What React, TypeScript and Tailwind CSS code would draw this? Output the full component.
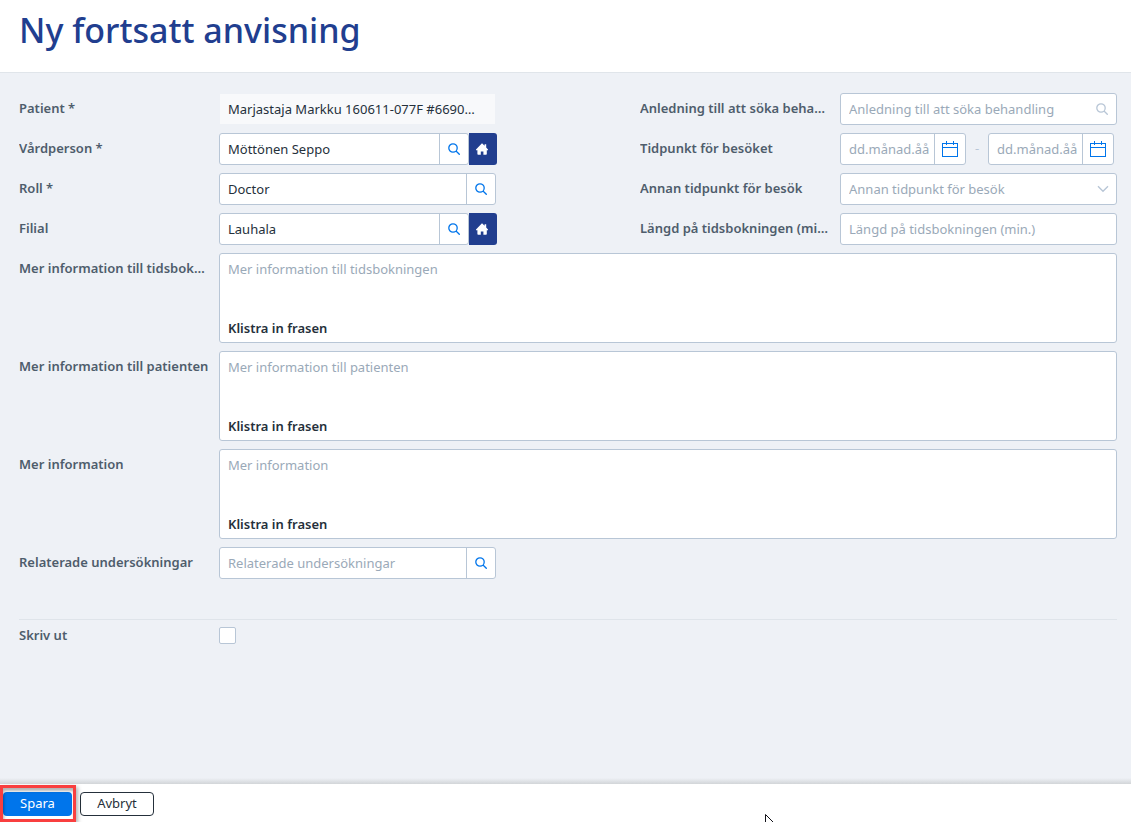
import type { ReactNode } from "react";

const inputClass =
  "h-full w-full min-w-0 truncate bg-transparent pl-2 text-[#25303b] outline-none placeholder:text-[#9aa9b8]";
const boxClass = "flex h-8 w-full rounded-[3px] border border-[#b8c6d6] bg-white";
const labelClass = "h-8 truncate pr-2 font-semibold leading-[30px] text-[#4e5d6c]";

function SearchIcon() {
  return (
    <svg width="12" height="12" viewBox="0 0 12 12" fill="none" stroke="currentColor" strokeWidth="1.3">
      <circle cx="5" cy="5" r="4.2" />
      <path d="M8 8l3.7 3.7" />
    </svg>
  );
}

function HomeIcon() {
  return (
    <svg width="12" height="12" viewBox="0 0 12 12" fill="currentColor">
      <path d="M6 0.3L8.6 2.8V1.2h1.6v3.2L12 6.4v0.8h-1.2V11a.8.8 0 0 1-.8.8H7.4V8.4H4.8v3.4H2.2a.8.8 0 0 1-.8-.8V7.2H0V6.4z" />
    </svg>
  );
}

function CalendarIcon() {
  return (
    <svg width="16" height="16" viewBox="0 0 16 16" fill="none" stroke="currentColor" shapeRendering="crispEdges">
      <path d="M.5 2.5h15v13H.5zM0 6.5h16M4.5 0v4M11.5 0v4" />
    </svg>
  );
}

function Label({ id, children }: { id: string; children: ReactNode }) {
  return (
    <label htmlFor={id} className={labelClass}>
      {children}
    </label>
  );
}

type LookupProps = { id: string; value?: string; placeholder?: string; home?: boolean };

function LookupField({ id, value, placeholder, home }: LookupProps) {
  return (
    <div className={home ? "-mr-px flex" : "flex"}>
      <div className={boxClass}>
        <input id={id} type="text" defaultValue={value} placeholder={placeholder} className={inputClass} />
        <button
          type="button"
          aria-label="Sök"
          className="flex w-[29px] shrink-0 items-center justify-center border-l border-[#b8c6d6] text-[#0075eb]"
        >
          <SearchIcon />
        </button>
      </div>
      {home && (
        <button
          type="button"
          aria-label="Hem"
          className="flex h-8 w-7 shrink-0 items-center justify-center rounded-r-[3px] bg-[#213e8f] pr-0.5 text-white"
        >
          <HomeIcon />
        </button>
      )}
    </div>
  );
}

function DateField({ id, label }: { id: string; label?: string }) {
  return (
    <div className="flex h-8 w-[126px] rounded-[3px] border border-[#b8c6d6] bg-white">
      <input id={id} aria-label={label} type="text" placeholder="dd.månad.åå" className={inputClass} />
      <button
        type="button"
        aria-label="Kalender"
        className="flex w-[31px] shrink-0 items-center justify-center border-l border-[#b8c6d6] text-[#0075eb]"
      >
        <CalendarIcon />
      </button>
    </div>
  );
}

function NoteField({ id, label }: { id: string; label: string }) {
  return (
    <>
      <Label id={id}>{label}</Label>
      <div className="col-span-4 flex h-[90px] flex-col items-start rounded-[3px] border border-[#b8c6d6] bg-white">
        <textarea
          id={id}
          placeholder={label}
          className="w-full flex-1 resize-none px-2 pt-[5px] leading-5 outline-none placeholder:text-[#9aa9b8]"
        />
        <button type="button" className="h-[26px] px-2 font-semibold text-[#25303b]">
          Klistra in frasen
        </button>
      </div>
    </>
  );
}

export default function App() {
  return (
    <div className="flex min-h-screen flex-col bg-[#eef1f6] font-['Noto_Sans','Open_Sans',sans-serif] text-[13px]">
      <header className="h-[73px] border-b border-[#e0e5ea] bg-white px-[19px] pt-1">
        <h1 className="text-[34px] font-medium leading-[52px] text-[#213e8f]">Ny fortsatt anvisning</h1>
      </header>

      <main className="flex-1 pt-5 pr-3.5 pl-[19px]">
        <form>
          <div className="grid grid-cols-[200px_minmax(0,1fr)_144px_200px_minmax(0,1fr)] gap-y-2">
            <Label id="patient">Patient *</Label>
            <div className="h-8 p-px">
              <input
                id="patient"
                type="text"
                readOnly
                defaultValue="Marjastaja Markku 160611-077F #6690…"
                className="h-full w-full truncate bg-[#f8f9fb] px-2 text-[#25303b] outline-none"
              />
            </div>
            <div />
            <Label id="reason">Anledning till att söka behandling</Label>
            <div className={boxClass}>
              <input id="reason" type="text" placeholder="Anledning till att söka behandling" className={inputClass} />
              <button
                type="button"
                aria-label="Sök"
                className="flex w-7 shrink-0 items-center justify-center text-[#b8c6d6]"
              >
                <SearchIcon />
              </button>
            </div>

            <Label id="provider">Vårdperson *</Label>
            <LookupField id="provider" value="Möttönen Seppo" home />
            <div />
            <Label id="visit-from">Tidpunkt för besöket</Label>
            <div className="flex items-center">
              <DateField id="visit-from" />
              <span className="w-[22px] text-center text-[#b8c6d6]">-</span>
              <DateField id="visit-to" label="Tidpunkt för besöket, till" />
            </div>

            <Label id="role">Roll *</Label>
            <LookupField id="role" value="Doctor" />
            <div />
            <Label id="other-time">Annan tidpunkt för besök</Label>
            <div className="relative">
              <select
                id="other-time"
                className="h-8 w-full appearance-none rounded-[3px] border border-[#b8c6d6] bg-white px-2 pt-px text-[#9aa9b8] outline-none"
              >
                <option>Annan tidpunkt för besök</option>
              </select>
              <svg
                className="pointer-events-none absolute top-3 right-2 text-[#b8c6d6]"
                width="12"
                height="8"
                viewBox="0 0 12 8"
                fill="none"
                stroke="currentColor"
                strokeWidth="1.4"
              >
                <path d="M1 1.2l5 5 5-5" />
              </svg>
            </div>

            <Label id="branch">Filial</Label>
            <LookupField id="branch" value="Lauhala" home />
            <div />
            <Label id="duration">Längd på tidsbokningen (min.)</Label>
            <div className={boxClass}>
              <input id="duration" type="text" placeholder="Längd på tidsbokningen (min.)" className={inputClass} />
            </div>

            <NoteField id="booking-info" label="Mer information till tidsbokningen" />
            <NoteField id="patient-info" label="Mer information till patienten" />
            <NoteField id="more-info" label="Mer information" />

            <Label id="related">Relaterade undersökningar</Label>
            <LookupField id="related" placeholder="Relaterade undersökningar" />
          </div>

          <div className="mt-10 grid grid-cols-[200px_1fr] border-t border-[#dfe4ea]">
            <Label id="print">Skriv ut</Label>
            <input
              id="print"
              type="checkbox"
              className="mt-[7px] size-[17px] appearance-none rounded-[2px] border border-[#b8c6d6] bg-white checked:bg-[#0075eb]"
            />
          </div>
        </form>
      </main>

      <div className="h-1.5 bg-linear-to-b from-[#eef1f6] to-[#d2d5d8]" />
      <footer className="relative flex h-[38px] items-start gap-2 bg-white pt-2 pl-[3px]">
        <button type="button" className="h-6 w-[69px] rounded bg-[#0075eb] text-white">
          Spara
        </button>
        <button type="button" className="h-6 w-[74px] rounded border border-[#25303b] bg-white text-[#25303b]">
          Avbryt
        </button>
        <div className="pointer-events-none absolute top-px left-0 h-[37px] w-[76px] border-3 border-[#f93f3f] shadow-[2px_2px_4px_rgba(0,0,0,0.3),inset_1px_3px_3px_rgba(0,0,0,0.3)]" />
        <svg className="absolute bottom-0 left-[765px]" width="10" height="8" viewBox="0 0 10 8">
          <path d="M.5 9V.5L9 9" fill="white" stroke="#111118" />
        </svg>
      </footer>
    </div>
  );
}
